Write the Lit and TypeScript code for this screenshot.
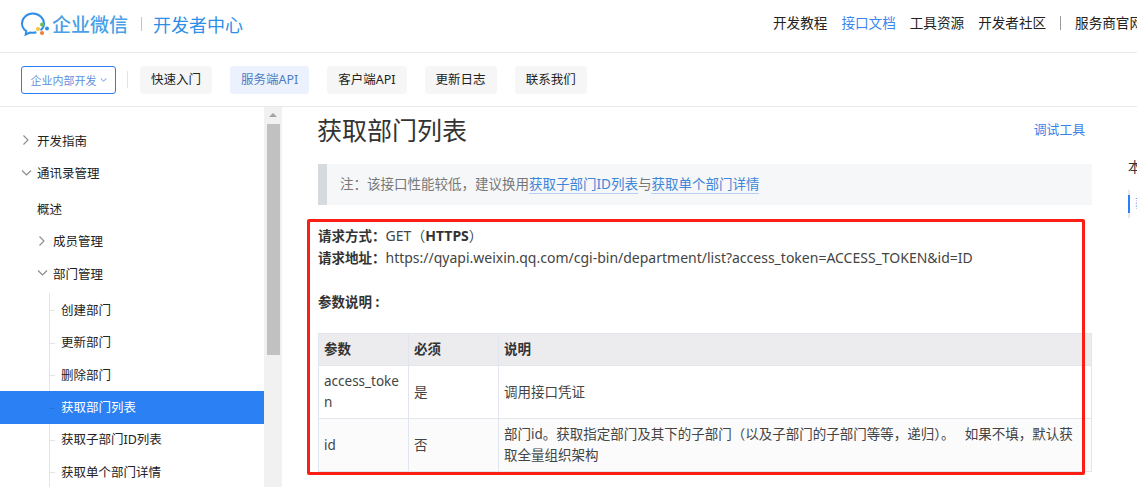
import { LitElement, html, css, svg } from 'lit';
import { customElement } from 'lit/decorators.js';
import { classMap } from 'lit/directives/class-map.js';

const TOP_NAV = [
  { label: '开发教程' },
  { label: '接口文档', active: true },
  { label: '工具资源' },
  { label: '开发者社区' },
];

const TABS = [
  { label: '快速入门' },
  { label: '服务端API', active: true },
  { label: '客户端API' },
  { label: '更新日志' },
  { label: '联系我们' },
];

const SUB_ITEMS = [
  { label: '创建部门' },
  { label: '更新部门' },
  { label: '删除部门' },
  { label: '获取部门列表', active: true },
  { label: '获取子部门ID列表' },
  { label: '获取单个部门详情' },
];

// full-width punctuation, as on the page
const NOTE_LEAD = '注\uFF1A该接口性能较低\uFF0C建议换用';
const METHOD_LABEL = '请求方式\uFF1A';
const URL_LABEL = '请求地址\uFF1A';
const ID_DESC =
  '部门id\u3002获取指定部门及其下的子部门\uFF08以及子部门的子部门等等\uFF0C递归\uFF09\u3002 \u2002如果不填\uFF0C默认获取全量组织架构';

const chevronRight = svg`<path d="M2.5 1.5 7 6 2.5 10.5" fill="none" stroke="#8a8a8a" stroke-width="1.1"/>`;
const chevronDown = svg`<path d="M1 3.5 5.5 8 10 3.5" fill="none" stroke="#8a8a8a" stroke-width="1.1"/>`;

@customElement('app-root')
export class AppRoot extends LitElement {
  static styles = css`
    :host {
      display: block;
      width: 1137px;
      height: 487px;
      overflow: hidden;
      background: #fff;
      font-family: "Noto Sans", "Noto Sans CJK SC", sans-serif;
      color: #333;
    }

    /* top bar */
    .topbar {
      display: flex;
      justify-content: space-between;
      height: 52px;
      padding-left: 21px;
      border-bottom: 1px solid #e9e9e9;
      white-space: nowrap;
    }
    .brand {
      display: flex;
      align-items: center;
      height: 48px;
    }
    .brand svg {
      display: block;
    }
    .brand-name {
      font-size: 19px;
      font-weight: 500;
      color: #4a9fe8;
    }
    .brand-sep {
      width: 1px;
      height: 14px;
      margin: 0 11px 0 13px;
      background: #a9c9e6;
    }
    .brand-sub {
      font-size: 18px;
      color: #2f8fe6;
    }
    .topnav {
      display: flex;
      width: 364px;
      flex: none;
      overflow: hidden;
      font-size: 13.6px;
      color: #222;
    }
    .topnav a {
      display: block;
      height: 47px;
      line-height: 45px;
      margin-right: 14px;
    }
    .topnav a.on {
      height: 46px;
      color: #3b86ee;
      border-bottom: 1px solid #2b7ff6;
      padding-bottom: 6px;
    }
    .topnav i {
      width: 1px;
      height: 14px;
      margin: 16px 14px 0 0;
      background: #999;
      flex: none;
    }

    /* second bar */
    .subbar {
      display: flex;
      align-items: center;
      height: 53px;
      padding-left: 21px;
      border-bottom: 1px solid #e9e9e9;
    }
    .picker {
      display: flex;
      align-items: center;
      justify-content: center;
      gap: 3px;
      width: 95px;
      height: 28px;
      box-sizing: border-box;
      border: 1px solid #2b7ff6;
      border-radius: 3px;
      font-size: 11px;
      color: #5f8fdc;
    }
    .subbar-sep {
      width: 1px;
      height: 17px;
      margin: 0 12px 0 11px;
      background: #e4e4e4;
    }
    .tabs {
      display: flex;
      gap: 18px;
    }
    .tab {
      height: 28px;
      line-height: 27px;
      padding: 0 11px;
      border-radius: 3px;
      background: #f6f6f6;
      font-size: 12.5px;
      color: #222;
    }
    .tab.on {
      background: #ebf2fd;
      color: #4f7cc4;
    }

    /* body */
    .body {
      display: flex;
      position: relative;
      height: 380px;
      overflow: hidden;
    }
    .side {
      flex: none;
      width: 264px;
      padding-top: 18px;
      font-size: 12.5px;
      color: #222;
    }
    .row {
      display: flex;
      align-items: center;
      height: 32.4px;
      box-sizing: border-box;
      padding-bottom: 2px;
    }
    .row svg {
      flex: none;
    }
    .lvl1 {
      padding-left: 21px;
      gap: 5px;
    }
    .lvl2 {
      padding-left: 37px;
    }
    .lvl2b {
      padding-left: 37px;
      gap: 5px;
    }
    .gap {
      margin-bottom: 3.6px;
    }
    .tree {
      position: relative;
    }
    .tree::before {
      content: '';
      position: absolute;
      left: 49px;
      top: -1px;
      bottom: 0;
      width: 1px;
      background: rgba(0, 0, 0, 0.1);
    }
    .leaf {
      position: relative;
      padding-left: 61px;
    }
    .leaf::before {
      content: '';
      position: absolute;
      left: 50px;
      top: 50%;
      width: 5px;
      height: 1px;
      background: rgba(0, 0, 0, 0.1);
    }
    .leaf.on {
      background: #2b80f3;
      color: #fff;
    }

    .scroll {
      flex: none;
      display: flex;
      flex-direction: column;
      align-items: center;
      width: 18px;
      background: #f1f1f1;
    }
    .scroll b {
      width: 0;
      height: 0;
      margin-top: 6px;
      border-left: 4px solid transparent;
      border-right: 4px solid transparent;
      border-bottom: 4px solid #a3a3a3;
    }
    .scroll i {
      width: 13px;
      height: 231px;
      margin-top: 7px;
      background: #c1c1c1;
    }

    .main {
      flex: none;
      width: 774px;
      padding: 5px 0 0 36px;
    }
    .title-row {
      display: flex;
      justify-content: space-between;
      align-items: center;
      height: 36px;
    }
    h1 {
      margin: -3px 0 0 -1px;
      font-size: 25px;
      font-weight: 400;
      color: #333;
    }
    .tool {
      margin-right: 7px;
      margin-top: -4px;
      font-size: 12.8px;
      color: #3a83e6;
    }
    .note {
      height: 41px;
      line-height: 41px;
      margin-top: 16px;
      padding-left: 13px;
      border-left: 9px solid #d5dade;
      background: #f6f7f9;
      font-size: 13.5px;
      color: #777;
    }
    .note a {
      color: #3f86d8;
      border-bottom: 1px solid #b5d0f2;
    }
    .lines {
      margin-top: 20px;
      font-size: 13.5px;
      line-height: 22px;
      color: #444;
    }
    .lines div {
      height: 22px;
      white-space: nowrap;
    }
    .lines b {
      color: #333;
    }
    .latin {
      font-size: 14px;
    }
    table {
      width: 774px;
      margin-top: 20px;
      border-collapse: collapse;
      table-layout: fixed;
      font-size: 13.5px;
      line-height: 21px;
      color: #444;
    }
    th,
    td {
      padding: 5px;
      border: 1px solid #e1e6ee;
      text-align: left;
      word-break: break-all;
    }
    th {
      height: 21px;
      background: #ececee;
      color: #333;
    }
    td.desc {
      padding-right: 12px;
    }
    .striped td {
      background: #fbfbfc;
    }

    .aside {
      flex: none;
      width: 9px;
      margin-left: 36px;
      padding-top: 49px;
      overflow: hidden;
      font-size: 13.5px;
      white-space: nowrap;
      color: #333;
    }
    .toc {
      display: flex;
      margin-top: 14px;
      padding: 5px 0;
      height: 18px;
      line-height: 18px;
      border-left: 2px solid #e8e8e8;
      color: #3a83e6;
      font-size: 12px;
    }
    .toc span {
      padding-left: 5px;
      box-shadow: -2px 0 0 #2b7ff6;
    }

    /* annotation drawn over the page */
    .mark {
      position: absolute;
      left: 307px;
      top: 112px;
      width: 778px;
      height: 256px;
      box-sizing: border-box;
      border: 3px solid #fa1e14;
      border-radius: 2px;
      pointer-events: none;
    }
  `;

  renderLogo() {
    return html`<svg width="31" height="26" viewBox="0 0 31 26">
      <path
        d="M19.5 19.2C21.6 17.6 23 15.4 23 12.5 23 7 17.8 2.5 11.8 2.5S1 7 1 12.5c0 3.2 1.7 5.9 4.3 7.6l-.6 3.4 4.2-2c1 .2 2 .3 3 .3 1.3 0 2.4-.2 3.5-.5"
        fill="none"
        stroke="#2f8fe6"
        stroke-width="2"
      />
      <circle cx="21" cy="13.5" r="2" fill="#6cc04a" />
      <circle cx="26" cy="17.5" r="2" fill="#2f8fe6" />
      <circle cx="21" cy="22" r="2" fill="#ee7d31" />
      <circle cx="17" cy="18" r="2" fill="#f7c32e" />
    </svg>`;
  }

  renderChevron(open: boolean) {
    return html`<svg width="11" height="12" viewBox="0 0 11 12">${open ? chevronDown : chevronRight}</svg>`;
  }

  render() {
    return html`
      <header class="topbar">
        <div class="brand">
          ${this.renderLogo()}
          <span class="brand-name">企业微信</span>
          <span class="brand-sep"></span>
          <span class="brand-sub">开发者中心</span>
        </div>
        <nav class="topnav">
          ${TOP_NAV.map((n) => html`<a class=${classMap({ on: !!n.active })}>${n.label}</a>`)}
          <i></i>
          <a>服务商官网</a>
        </nav>
      </header>

      <div class="subbar">
        <div class="picker">
          企业内部开发
          <svg width="7" height="6" viewBox="0 0 7 6"><path d="M.8 1.5 3.5 4.2 6.2 1.5" fill="none" stroke="#5f8fdc" /></svg>
        </div>
        <span class="subbar-sep"></span>
        <div class="tabs">
          ${TABS.map((t) => html`<div class=${classMap({ tab: true, on: !!t.active })}>${t.label}</div>`)}
        </div>
      </div>

      <div class="body">
        <aside class="side">
          <div class="row lvl1">${this.renderChevron(false)}开发指南</div>
          <div class="row lvl1 gap">${this.renderChevron(true)}通讯录管理</div>
          <div class="row lvl2">概述</div>
          <div class="row lvl2b">${this.renderChevron(false)}成员管理</div>
          <div class="row lvl2b gap">${this.renderChevron(true)}部门管理</div>
          <div class="tree">
            ${SUB_ITEMS.map((s) => html`<div class=${classMap({ row: true, leaf: true, on: !!s.active })}>${s.label}</div>`)}
          </div>
        </aside>
        <div class="scroll"><b></b><i></i></div>

        <main class="main">
          <div class="title-row">
            <h1>获取部门列表</h1>
            <a class="tool">调试工具</a>
          </div>
          <div class="note">${NOTE_LEAD}<a>获取子部门ID列表</a>与<a>获取单个部门详情</a></div>
          <div class="lines">
            <div><b>${METHOD_LABEL}</b><span class="latin">GET${'\uFF08'}<b>HTTPS</b>${'\uFF09'}</span></div>
            <div><b>${URL_LABEL}</b><span class="latin">https://qyapi.weixin.qq.com/cgi-bin/department/list?access_token=ACCESS_TOKEN&amp;id=ID</span></div>
            <div></div>
            <div><b>参数说明 :</b></div>
          </div>
          <table>
            <colgroup>
              <col style="width: 90px" />
              <col style="width: 90px" />
              <col />
            </colgroup>
            <tr>
              <th>参数</th>
              <th>必须</th>
              <th>说明</th>
            </tr>
            <tr>
              <td>access_token</td>
              <td>是</td>
              <td>调用接口凭证</td>
            </tr>
            <tr class="striped">
              <td>id</td>
              <td>否</td>
              <td class="desc">${ID_DESC}</td>
            </tr>
          </table>
        </main>

        <div class="aside">
          本页目录
          <div class="toc"><span>获取部门列表</span></div>
        </div>

        <div class="mark"></div>
      </div>
    `;
  }
}
